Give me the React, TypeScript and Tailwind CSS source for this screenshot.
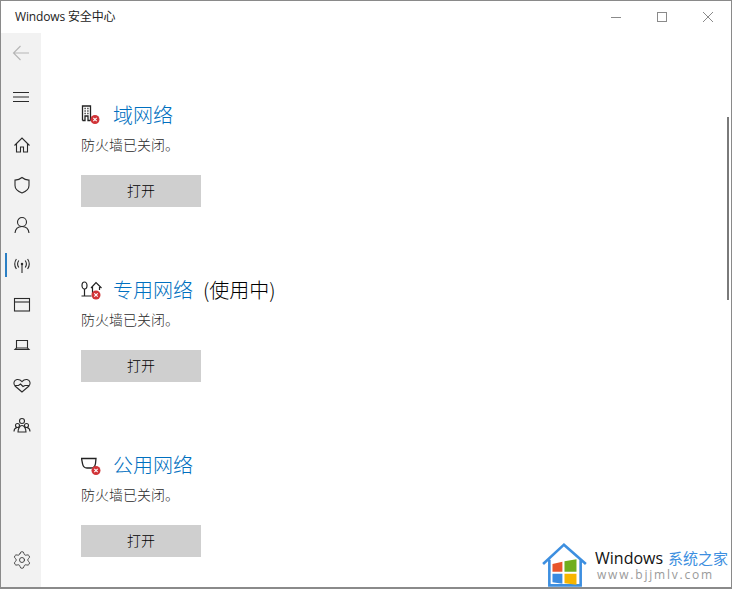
import React from "react";
import { Settings } from "lucide-react";

const cjk = "font-['Segoe_UI','Noto_Sans_CJK_SC',sans-serif]";

function X({ cx, cy }: { cx: number; cy: number }) {
  return (
    <g>
      <circle cx={cx} cy={cy} r={4.5} fill="#d13438" stroke="none" />
      <path d={`M${cx - 1.7} ${cy - 1.7}l3.4 3.4m0-3.4l-3.4 3.4`} stroke="#fff" strokeWidth={1.1} />
    </g>
  );
}

function Ico({ children, w = 20, h = 20 }: { children: React.ReactNode; w?: number; h?: number }) {
  return (
    <svg width={w} height={h} viewBox={`0 0 ${w} ${h}`} fill="none" stroke="#2b2b2b" strokeWidth={1.1}>
      {children}
    </svg>
  );
}

const navIcons: React.ReactNode[] = [
  <path d="M2.500 10.500L10 3l7.500 7.500M4.500 8.500v8.500h4v-5h3v5h4V8.500" />,
  <path d="M10 2.500c2 1.800 4.500 2.600 7 2.600v5.400c0 3.600-2.800 5.900-7 7.500-4.200-1.600-7-3.900-7-7.500V5.100c2.500 0 5-.8 7-2.600z" />,
  <>
    <circle cx={10} cy={7} r={4.500} />
    <path d="M3 18c.4-4 3.200-6.500 7-6.500s6.600 2.500 7 6.500" />
  </>,
  <>
    <path d="M10 9.500V18" />
    <circle cx={10} cy={9} r={.7} fill="#2b2b2b" />
    <path d="M6.800 5.500c-1.400 2-1.400 5 0 7M13.200 5.500c1.400 2 1.400 5 0 7M4.400 4c-2 3-2 7 0 10M15.600 4c2 3 2 7 0 10" />
  </>,
  <>
    <rect x={2.500} y={3.500} width={15} height={12.500} />
    <path d="M2.500 7h15" />
  </>,
  <>
    <path d="M4.500 13V5.500h11V13" />
    <path d="M3 14.500l1.500-1.500h11l1.500 1.500z" />
  </>,
  <path d="M10 17l-7-6c-2-2.200-1.200-6 2-6.500 2-.3 3.700.6 5 2.200 1.300-1.600 3-2.500 5-2.200 3.200.5 4 4.300 2 6.500zM2.500 10.500h4l2-1.500 2.500 2.500 2-1h4.500" />,
  <>
    <circle cx={10} cy={6} r={2.500} />
    <circle cx={5.500} cy={10.500} r={2} />
    <circle cx={14.500} cy={10.500} r={2} />
    <path d="M6 17c0-3 1.500-6.500 4-6.500s4 3.500 4 6.500zM2 16.500c0-2 1-3.500 3-4M18 16.500c0-2-1-3.500-3-4" />
  </>,
];

function NavItem({ children, active }: { children: React.ReactNode; active?: boolean }) {
  return (
    <div className="relative flex h-10 w-full items-center justify-center pl-[2px]">
      {active && <div className="absolute left-[4px] top-[8px] h-[24px] w-[2px] bg-[#2b7fc4]" />}
      {children}
    </div>
  );
}

function Section({
  icon,
  title,
  suffix,
}: {
  icon: React.ReactNode;
  title: string;
  suffix?: string;
}) {
  return (
    <section className="h-[175px]">
      <div className="flex h-[28px] items-center">
        <div className="mr-[11px] h-[20px] w-[21px]">{icon}</div>
        <h2 className="text-[20px] leading-[28px] font-light text-[#0070c0]">{title}</h2>
        {suffix && <span className="ml-[10px] text-[20px] leading-[28px] font-light text-black">{suffix}</span>}
      </div>
      <p className="mt-[5px] text-[14px] leading-[20px] font-light text-[#2b2b2b]">防火墙已关闭。</p>
      <button className="mt-[21px] flex h-[32px] w-[120px] items-center justify-center bg-[#cfcfcf] pb-[2px] text-[14px] font-light text-black">
        打开
      </button>
    </section>
  );
}

export default function App() {
  return (
    <div className={`relative flex h-[589px] w-[732px] flex-col overflow-hidden border border-b-2 border-[#8a8a8a] bg-white ${cjk}`}>
      <header className="flex h-[32px] shrink-0 items-center justify-between">
        <span className="pl-[14px] font-['Open_Sans','Noto_Sans_CJK_SC',sans-serif] text-[12px] tracking-[-0.15px] text-[#222222]">
          Windows 安全中心
        </span>
        <div className="flex h-full">
          <div className="flex w-[46px] items-center justify-center">
            <div className="h-px w-[10px] bg-[#8a8a8a]" />
          </div>
          <div className="flex w-[46px] items-center justify-center">
            <div className="h-[10px] w-[10px] border border-[#8a8a8a]" />
          </div>
          <div className="flex w-[46px] items-center justify-center">
            <svg width="12" height="12" viewBox="0 0 12 12" stroke="#8a8a8a" strokeWidth="1">
              <path d="M1 1l10 10M11 1L1 11" />
            </svg>
          </div>
        </div>
      </header>
      <div className="flex min-h-0 flex-1">
        <aside className="flex w-[40px] shrink-0 flex-col items-center bg-[#f2f2f2]">
          <div className="flex h-[40px] w-full items-center justify-center">
            <svg width="18" height="16" viewBox="0 0 18 16" fill="none" stroke="#b5b5b5" strokeWidth="1.100">
              <path d="M17 8H1.500M8.500 1L1.500 8l7 7" />
            </svg>
          </div>
          <div className="mt-[4px] flex h-[40px] w-full items-center justify-center">
            <svg width="16" height="12" viewBox="0 0 16 12" fill="none" stroke="#2b2b2b" strokeWidth="1.100">
              <path d="M0 1.500h16M0 6h16M0 10.500h16" />
            </svg>
          </div>
          <div className="mt-[8px] w-full">
            {navIcons.map((n, i) => (
              <NavItem key={i} active={i === 3}>
                <Ico>{n}</Ico>
              </NavItem>
            ))}
          </div>
          <div className="mt-auto mb-[7px] flex h-[40px] w-full items-center justify-center pl-[2px]">
            <Settings size={20} strokeWidth={1} color="#2b2b2b" />
          </div>
        </aside>
        <main className="min-w-0 flex-1 pl-[40px] pt-[68px]">
          <Section
            title="域网络"
            icon={
              <svg width="21" height="20" viewBox="0 0 21 20" fill="none" stroke="#222" strokeWidth="1.300">
                <path d="M1.500 15.500V1h8v14.500M1.500 15.500h2.500V11h3v4.500h2.500" />
                <path d="M3.500 3.500h1.200M6.300 3.500h1.200M3.500 6h1.200M6.300 6h1.200M3.500 8.500h1.200M6.300 8.500h1.200" />
                <X cx={14} cy={14.500} />
              </svg>
            }
          />
          <Section
            title="专用网络"
            suffix="(使用中)"
            icon={
              <svg width="21" height="20" viewBox="0 0 21 20" fill="none" stroke="#222" strokeWidth="1.200">
                <ellipse cx={3.500} cy={5.500} rx={2.500} ry={3.500} />
                <path d="M3.500 9v7M.5 16h10M10 8l5-5.500L20.500 8M11.500 7v7M18.500 7v3" />
                <X cx={15} cy={15} />
              </svg>
            }
          />
          <Section
            title="公用网络"
            icon={
              <svg width="21" height="20" viewBox="0 0 21 20" fill="none" stroke="#222" strokeWidth="1.300">
                <path d="M.5 3.500H15l-.5 5c-.4 3-2 4.500-4.500 4.500H6c-2.500 0-4-1.500-4.500-4.500z" />
                <X cx={15} cy={15.500} />
              </svg>
            }
          />
        </main>
      </div>
      {/* scrollbar thumb */}
      <div className="absolute right-[2px] top-[116px] h-[183px] w-[2px] bg-[#7a7a7a]" />
      {/* watermark */}
      <div className="absolute -right-px -bottom-[2px] flex h-[50px] w-[190px] items-center bg-white">
        <svg width="48" height="46" viewBox="0 0 46 44" className="ml-[-1px] mt-[2px] shrink-0">
          <path d="M2 21L22 2.500 43 21M8 17v24.500h30V17" fill="none" stroke="#3d8fe0" strokeWidth="2.500" />
          <path d="M11 21l9.500-2v9.500H11z" fill="#e8552b" />
          <path d="M22.500 18.500l11.500-2v12H22.500z" fill="#6fae1e" />
          <path d="M11 30.500h9.500V40L11 38.500z" fill="#3a8be0" />
          <path d="M22.500 30.500H34V41l-11.500-1.500z" fill="#f7b500" />
        </svg>
        <div className="ml-[6px] mt-[3px] flex flex-col">
          <div className="flex h-[18px] items-center text-[16px] leading-[18px]">
            <span className="font-['Open_Sans',sans-serif] text-[#111111]">Windows</span>
            <span className="ml-[5px] font-['Noto_Sans_CJK_SC',sans-serif] text-[15px] leading-[18px] text-[#3d8fe0]">系统之家</span>
          </div>
          <span className="ml-[2px] font-['Open_Sans',sans-serif] text-[12px] leading-[15px] tracking-[1.800px] text-[#9a9a9a]">
            www.bjjmlv.com
          </span>
        </div>
      </div>
    </div>
  );
}
